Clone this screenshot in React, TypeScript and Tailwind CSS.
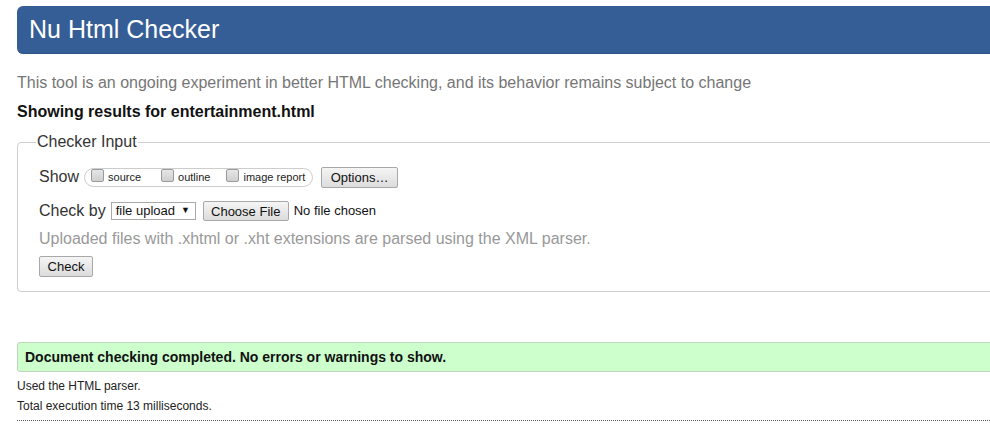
import React from "react";

function Checkbox() {
  return (
    <span className="inline-block w-[13px] h-[13px] border border-[#9a9a9a] rounded-[2px] bg-gradient-to-b from-[#e6e6e6] to-[#cfcfcf] mr-[4px] mt-[-3px]" />
  );
}

export default function App() {
  return (
    <div className="w-[990px] h-[440px] overflow-hidden bg-white text-[#222]" style={{ fontFamily: '"Liberation Sans", Arial, sans-serif' }}>
      <div className="w-[1010px] pl-[17px] pt-[6px]">
        <div className="h-[48px] bg-[#365e96] rounded-l-[6px] flex items-center pl-[12px] border-b border-[#2f5487]">
          <span className="text-white text-[25px] leading-none">Nu Html Checker</span>
        </div>
        <p className="mt-[20px] text-[16px] leading-[18px] text-[#767676]">
          This tool is an ongoing experiment in better HTML checking, and its behavior remains subject to change
        </p>
        <p className="mt-[11px] text-[16px] leading-[18px] font-bold text-[#111]">Showing results for entertainment.html</p>
        <fieldset className="mt-[11px] border border-[#cfcfcf] rounded-[4px] pl-[21px] pb-[14px] h-[160px]">
          <legend className="text-[16px] text-[#333] px-[1px] ml-[-3px] leading-[20px]">Checker Input</legend>
          <div className="flex items-center mt-[14px] h-[22px]">
            <span className="text-[16px] text-[#333]">Show</span>
            <div className="ml-[5px] h-[19px] w-[229px] border border-[#cdcdcd] rounded-full flex items-center pl-[6px] text-[11px] text-[#222]">
              <Checkbox />
              <span>source</span>
              <span className="ml-[20px] flex items-center"><Checkbox /></span>
              <span>outline</span>
              <span className="ml-[16px] flex items-center"><Checkbox /></span>
              <span>image report</span>
            </div>
            <button className="ml-[8px] h-[21px] w-[77px] border border-[#a8a8a8] rounded-[2px] bg-gradient-to-b from-[#f5f5f5] to-[#dcdcdc] text-[13px] text-[#111] leading-none">Options…</button>
          </div>
          <div className="flex items-center mt-[13px] h-[20px]">
            <span className="text-[16px] text-[#333]">Check by</span>
            <div className="ml-[5px] h-[18px] w-[85px] border border-[#a9a9a9] bg-white flex items-center pl-[4px] text-[13px] text-[#111]">
              <span>file upload</span>
              <span className="ml-[6px] text-[9px]">▼</span>
            </div>
            <button className="ml-[7px] h-[20px] w-[86px] border border-[#a8a8a8] rounded-[2px] bg-gradient-to-b from-[#f5f5f5] to-[#dcdcdc] text-[13px] text-[#111] leading-none">Choose File</button>
            <span className="ml-[5px] text-[13px] text-[#111]">No file chosen</span>
          </div>
          <p className="mt-[8px] text-[16px] leading-[20px] text-[#999]">Uploaded files with .xhtml or .xht extensions are parsed using the XML parser.</p>
          <button className="mt-[7px] h-[21px] w-[54px] border border-[#a8a8a8] rounded-[2px] bg-gradient-to-b from-[#f5f5f5] to-[#dcdcdc] text-[13px] text-[#111] leading-none block">Check</button>
        </fieldset>
        <div className="mt-[50px] h-[30px] bg-[#ccffcc] border border-[#bfd3bf] rounded-l-[3px] flex items-center pl-[7px]">
          <span className="text-[14px] font-bold text-[#111]">Document checking completed. No errors or warnings to show.</span>
        </div>
        <p className="mt-[6px] text-[12px] leading-[16px] text-[#222]">Used the HTML parser.</p>
        <p className="mt-[4px] text-[12px] leading-[16px] text-[#222]">Total execution time 13 milliseconds.</p>
        <div className="mt-[6px] border-t border-dotted border-[#555]" />
      </div>
    </div>
  );
}
